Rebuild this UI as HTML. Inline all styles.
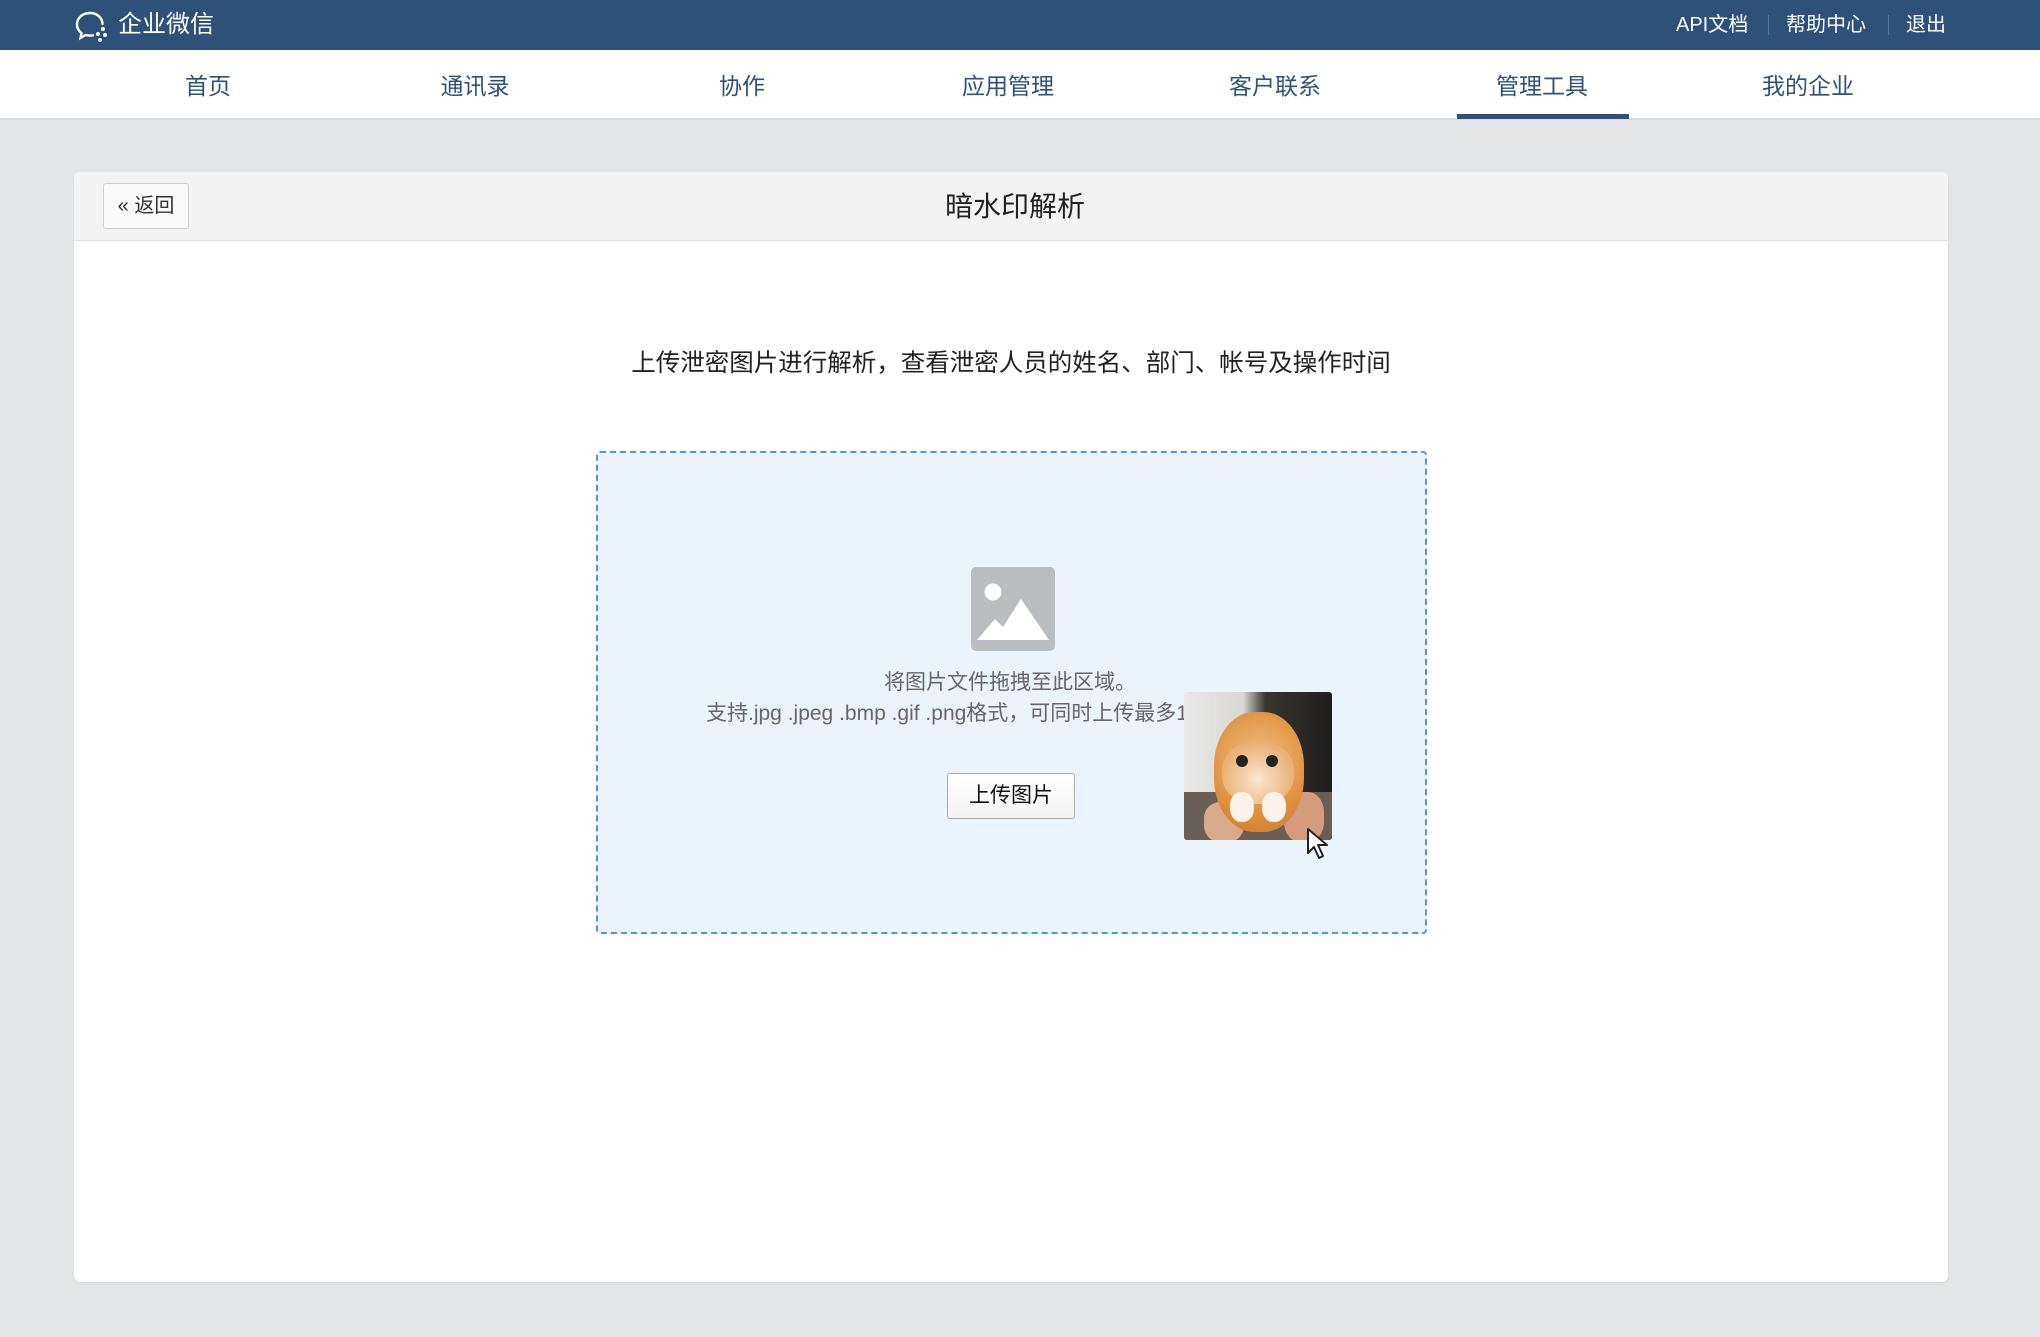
<!DOCTYPE html>
<html><head><meta charset="utf-8"><style>
*{margin:0;padding:0;box-sizing:border-box}
body{width:2040px;height:1337px;background:#e4e5e7;font-family:"Liberation Sans","Noto Sans CJK SC",sans-serif;position:relative;overflow:hidden}
.top{position:absolute;left:0;top:0;width:2040px;height:50px;background:#2d5178}
.logo{position:absolute;left:118px;top:9px;color:#fff;font-size:24px;line-height:32px}
.tr{position:absolute;top:12px;color:#fff;font-size:20px;line-height:26px}
.sep{position:absolute;top:15px;width:1px;height:20px;background:#5a7698}
.nav{position:absolute;left:0;top:50px;width:2040px;height:70px;background:#fff;border-bottom:2px solid #d9dadc}
.nav span{position:absolute;top:17px;font-size:23px;color:#2d5178;transform:translateX(-50%);white-space:nowrap}
.ul{position:absolute;left:1457px;top:114px;width:172px;height:5px;background:#2d5178}
.card{position:absolute;left:74px;top:172px;width:1874px;height:1110px;background:#fff;border-radius:6px;box-shadow:0 1px 2px rgba(0,0,0,.08);overflow:hidden}
.ch{position:absolute;left:0;top:0;width:100%;height:69px;background:#f3f3f3;border-bottom:1px solid #dedfe2}
.back{position:absolute;left:29px;top:11px;width:86px;height:46px;border:1px solid #cfcfcf;border-radius:3px;background:#fafafa;font-size:20px;line-height:44px;text-align:center;color:#333}
.title{position:absolute;left:0;width:100%;top:13px;text-align:center;font-size:28px;color:#222;padding-left:8px}
.desc{position:absolute;left:0;width:100%;top:172px;text-align:center;font-size:24.5px;color:#222}
.drop{position:absolute;left:522px;top:279px;width:831px;height:483px;background:#ebf3fd;border:2px dashed #4a94ea;border-radius:4px;overflow:hidden}
.t1,.t2{position:absolute;font-size:21px;color:#666;white-space:nowrap;overflow:hidden}
.btn{position:absolute;left:349px;top:320px;width:128px;height:46px;border:1px solid #a9a9a9;border-radius:3px;background:linear-gradient(#fff,#f3f3f3);font-size:21px;line-height:44px;text-align:center;color:#111}
.cat{position:absolute;left:586px;top:239px;width:148px;height:148px;border-radius:3px;overflow:hidden;background:linear-gradient(90deg,#e8e8e6 0,#d9d8d4 40%,#3a3530 55%,#1e1d1c 100%)}
</style></head><body>
<div class="top">
<svg style="position:absolute;left:74px;top:10px" width="36" height="32" viewBox="0 0 36 32"><path d="M16 3C8 3 3 8.5 3 14.5c0 3.5 1.8 6.5 4.5 8.5L6.5 28l5-3c1.4.4 3 .6 4.5.6 1 0 2-.1 3-.3" fill="none" stroke="#fff" stroke-width="2.4" stroke-linecap="round"/><path d="M16 3c7 0 12.5 4.8 12.5 11" fill="none" stroke="#fff" stroke-width="2.4" stroke-linecap="round"/><circle cx="29" cy="19" r="2" fill="#fff"/><circle cx="24" cy="24" r="2" fill="#fff"/><circle cx="31" cy="25" r="2" fill="#fff"/><circle cx="26" cy="30" r="2" fill="#fff"/></svg>
<div class="logo">企业微信</div>
<div class="tr" style="left:1676px">API文档</div><div class="sep" style="left:1768px"></div>
<div class="tr" style="left:1786px">帮助中心</div><div class="sep" style="left:1888px"></div>
<div class="tr" style="left:1906px">退出</div>
</div>
<div class="nav">
<span style="left:208px">首页</span><span style="left:475px">通讯录</span><span style="left:742px">协作</span><span style="left:1008px">应用管理</span><span style="left:1275px">客户联系</span><span style="left:1542px">管理工具</span><span style="left:1808px">我的企业</span>
</div>
<div class="ul"></div>
<div class="card">
<div class="ch"><div class="back">« 返回</div><div class="title">暗水印解析</div></div>
<div class="desc">上传泄密图片进行解析，查看泄密人员的姓名、部门、帐号及操作时间</div>
<div class="drop">
<svg style="position:absolute;left:373px;top:114px" width="84" height="84" viewBox="0 0 84 84"><rect width="84" height="84" rx="5" fill="#babdc0"/><circle cx="22" cy="25" r="8.5" fill="#fff"/><path d="M6 73 L24 52 L32 60 L50 32 L78 73Z" fill="#fff"/></svg>
<div class="t1" style="left:286px;top:213px">将图片文件拖拽至此区域。</div>
<div class="t2" style="left:108px;top:244px;width:478px">支持.jpg .jpeg .bmp .gif .png格式，可同时上传最多10张图片</div>
<div class="btn">上传图片</div>
<div class="cat">
<div style="position:absolute;left:0;top:100px;width:148px;height:48px;background:#6b5f55"></div>
<div style="position:absolute;left:20px;top:110px;width:40px;height:40px;border-radius:40%;background:#d8a98a"></div>
<div style="position:absolute;left:100px;top:100px;width:40px;height:50px;border-radius:40%;background:#d49c7c"></div>
<div style="position:absolute;left:30px;top:20px;width:90px;height:120px;border-radius:45%;background:radial-gradient(circle at 50% 40%,#f0c08a,#e0923f 60%,#c97a30)"></div>
<div style="position:absolute;left:38px;top:50px;width:72px;height:62px;border-radius:45%;background:radial-gradient(circle at 50% 60%,#fbe6cf,#eab074 70%)"></div>
<div style="position:absolute;left:52px;top:63px;width:12px;height:12px;border-radius:50%;background:#222"></div>
<div style="position:absolute;left:82px;top:63px;width:12px;height:12px;border-radius:50%;background:#222"></div>
<div style="position:absolute;left:46px;top:100px;width:24px;height:30px;border-radius:45%;background:#fbf3ea"></div>
<div style="position:absolute;left:78px;top:100px;width:24px;height:30px;border-radius:45%;background:#fbf3ea"></div>
</div>
<svg style="position:absolute;left:708px;top:374px" width="28" height="34" viewBox="0 0 28 34"><path d="M2 2 L2 26 L8 20 L13 31 L17 29 L12 18 L21 18Z" fill="#fff" stroke="#222" stroke-width="2" stroke-linejoin="round"/></svg>
</div>
</div>
</body></html>
